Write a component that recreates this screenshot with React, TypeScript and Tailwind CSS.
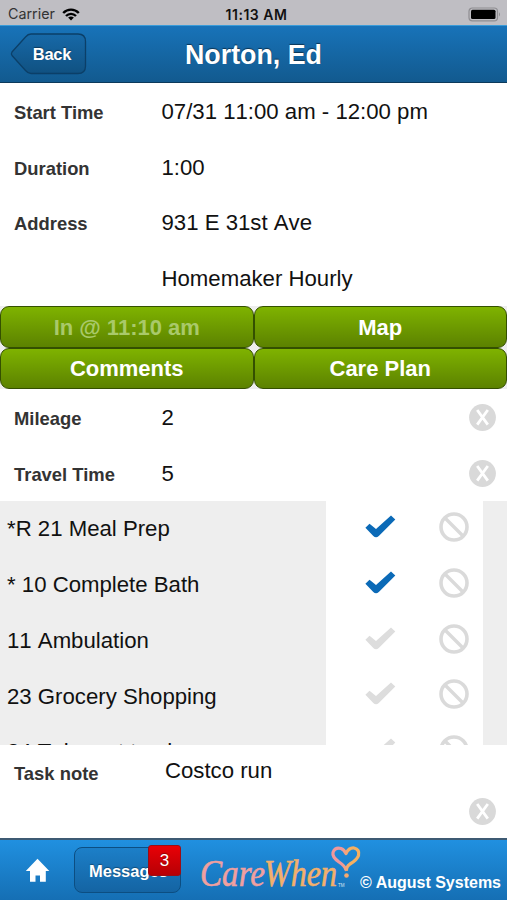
import type { ReactNode } from 'react';

const details = [
    { label: 'Start Time', value: '07/31 11:00 am - 12:00 pm' },
    { label: 'Duration', value: '1:00' },
    { label: 'Address', value: '931 E 31st Ave' },
    { label: '', value: 'Homemaker Hourly' },
];

const travel = [
    { label: 'Mileage', value: '2' },
    { label: 'Travel Time', value: '5' },
];

const actions = [
    { name: 'In @ 11:10 am', disabled: true },
    { name: 'Map', disabled: false },
    { name: 'Comments', disabled: false },
    { name: 'Care Plan', disabled: false },
];

const tasks = [
    { name: '*R 21 Meal Prep', done: true },
    { name: '* 10 Complete Bath', done: true },
    { name: '11 Ambulation', done: false },
    { name: '23 Grocery Shopping', done: false },
    { name: '24 Take out trash', done: false },
];

function ClearButton() {
    return (
        <button className="block shrink-0">
            <svg className="block h-[27px] w-[27px]" viewBox="0 0 27 27">
                <circle cx="13.5" cy="13.5" r="13.4" fill="#d9d9d9" />
                <path d="M8.2 6L18.8 20.6M18.8 6L8.2 20.6" stroke="#fff" strokeWidth="2.8" />
            </svg>
        </button>
    );
}

function CheckIcon({ done }: { done: boolean }) {
    return (
        <svg className="block h-[23px] w-[31px]" viewBox="0 0 31 23">
            <path
                d="M0.4 12.7L4.5 8.7L11 14L26 0.4L30.3 4.6L13.8 21Q11 23.6 8.3 21Z"
                fill={done ? '#0b6ab7' : '#dddddd'}
            />
        </svg>
    );
}

function BanIcon() {
    return (
        <svg className="block h-[30px] w-[30px]" viewBox="0 0 30 30" fill="none" stroke="#dadada">
            <circle cx="15" cy="15" r="13" strokeWidth="3.6" />
            <path d="M6 6L24 24" strokeWidth="3.4" />
        </svg>
    );
}

function Row({ label, value, children }: { label: string; value: string; children?: ReactNode }) {
    return (
        <div className="flex h-[55.6px] items-center pr-[11px] pl-[14px]">
            <div className="w-[147.5px] shrink-0 pt-[2px] text-[18.4px] font-bold text-[#333]">{label}</div>
            <div className="grow text-[22.2px] whitespace-nowrap text-[#111] [font-kerning:none]">{value}</div>
            {children}
        </div>
    );
}

function StatusBar() {
    return (
        <div className="grid h-[25px] grid-cols-3 items-center bg-[#bfbec3] pt-[3px] font-['Inter',sans-serif] text-[14px] text-[#111]">
            <div className="flex items-center gap-[7px] pl-[8px] text-[#333]">
                <span className="text-[14.3px]">Carrier</span>
                <svg className="h-[13px] w-[18px]" viewBox="0 0 18 13" fill="none" stroke="#000" strokeWidth="2.4">
                    <path d="M1.2 5C5.6 0.5 12.4 0.5 16.8 5" />
                    <path d="M4 8C6.8 5.1 11.2 5.1 14 8" />
                    <path d="M9 12.4L6.1 9.6Q9 7.2 11.9 9.6Z" fill="#000" stroke="none" />
                </svg>
            </div>
            <div className="pl-[6px] text-center font-semibold tracking-[0.5px]">11:13 AM</div>
            <div className="flex justify-end pr-[6px]">
                <svg className="h-[15px] w-[33px]" viewBox="0 0 33 15">
                    <rect x="1" y="1" width="28.5" height="12.8" rx="3.4" fill="none" stroke="#8f8e92" strokeWidth="1.2" />
                    <rect x="3" y="2.8" width="24.5" height="9.2" rx="1.5" fill="#000" />
                    <path d="M31 5.3Q33 7.4 31 9.5Z" fill="#8f8e92" />
                </svg>
            </div>
        </div>
    );
}

function Header() {
    return (
        <header className="relative flex h-[58px] items-center justify-center border-t border-b border-t-[#3b9cd8] border-b-[#0c3a5b] bg-gradient-to-b from-[#1873b9] to-[#125a8f] pt-[3px]">
            <button className="absolute top-[7px] left-[10px] h-[42px] w-[77px]">
                <svg className="absolute inset-0 h-full w-full" viewBox="0 0 77 42">
                    <defs>
                        <linearGradient id="back" x1="0" y1="0" x2="0" y2="1">
                            <stop offset="0" stopColor="#1769a8" />
                            <stop offset="1" stopColor="#105181" />
                        </linearGradient>
                    </defs>
                    <path
                        d="M21 1H68Q75.5 1 75.5 8.5V33Q75.5 40.5 68 40.5H21Q18 40.5 15.5 37.5L2 22.5Q0.8 20.8 2 19L15.5 4Q18 1 21 1Z"
                        fill="url(#back)"
                        stroke="#0b3f68"
                        strokeWidth="1.3"
                    />
                </svg>
                <span className="relative top-px pl-[7px] text-[16.5px] leading-none font-bold tracking-[-0.2px] text-white [text-shadow:0_-1px_1px_rgba(0,0,0,0.4)]">
                    Back
                </span>
            </button>
            <h1 className="text-[26.8px] font-bold text-white [text-shadow:0_-1px_1px_rgba(0,0,0,0.5)]">Norton, Ed</h1>
        </header>
    );
}

function Logo() {
    return (
        <svg className="block h-[60px] w-[166px]" viewBox="0 0 166 60">
            <defs>
                <linearGradient id="heart" x1="0" y1="0" x2="1" y2="0">
                    <stop offset="0.35" stopColor="#f0989c" />
                    <stop offset="0.65" stopColor="#f6b060" />
                </linearGradient>
            </defs>
            <g fontFamily="'Liberation Serif', serif" fontStyle="italic" fontSize="37" strokeWidth="0.6">
                <text x="5" y="45.500" textLength="65" lengthAdjust="spacingAndGlyphs" fill="#f0a09f" stroke="#f0a09f">Care</text>
                <text x="69" y="45.500" textLength="73" lengthAdjust="spacingAndGlyphs" fill="#f2b06c" stroke="#f2b06c">When</text>
            </g>
            <path
                d="M151 30Q150 26 144 22Q137 17 138 12.500Q140 7 146 8.500Q149 9.500 151 13.500Q154 7.500 159 8Q165 9.500 163.500 15.500Q162 20 155 24Q151 27 151.500 31"
                fill="none"
                stroke="url(#heart)"
                strokeWidth="3.2"
                strokeLinejoin="round"
            />
            <circle cx="151.500" cy="35.500" r="2.300" fill="#f6a96e" />
            <text x="143" y="47" fontFamily="'Liberation Sans', sans-serif" fontSize="4.500" fill="#d8e6f2">TM</text>
        </svg>
    );
}

function Footer() {
    return (
        <footer className="flex h-[62px] border-t-2 border-[#3d5a73] bg-gradient-to-b from-[#2090e0] to-[#156fb4]">
            <button className="mt-[18px] ml-[25px] h-[25px] w-[25px] shrink-0">
                <svg className="block h-[25px] w-[25px]" viewBox="0 0 25 25" fill="#fff">
                    <path d="M12.500 0.800L24.300 13H20.800V23.800H15V17.500H10.500V23.800H5V13H0.800Z" />
                </svg>
            </button>
            <button className="relative mt-[7px] ml-[24px] h-[46px] w-[107px] shrink-0 rounded-[8px] border border-[#0c4e82] bg-gradient-to-b from-[#1c7fc8] to-[#1464a3] pt-[2px] pl-[14px] text-left text-[16.5px] font-bold text-white [text-shadow:0_-1px_1px_rgba(0,0,0,0.35)]">
                Messages
                <span className="absolute -top-[3px] -right-px flex h-[31px] w-[33px] items-center justify-center rounded-[3px] border border-[#9c0d14] bg-gradient-to-b from-[#e90006] to-[#b70005] text-[17px] font-normal">
                    3
                </span>
            </button>
            <div className="ml-[14px] shrink-0">
                <Logo />
            </div>
            <div className="-ml-px pt-[33px] text-[16px] leading-[20px] font-bold whitespace-nowrap text-white">© August Systems</div>
        </footer>
    );
}

export default function App() {
    return (
        <div className="flex h-[900px] w-[507px] flex-col overflow-hidden bg-white font-['Liberation_Sans',Arial,sans-serif]">
            <StatusBar />
            <Header />

            <div className="h-[223px] pt-px">
                {details.map((item) => (
                    <Row key={item.value} label={item.label} value={item.value} />
                ))}
            </div>

            <div className="grid h-[83px] grid-cols-2 grid-rows-2 bg-[#eee]">
                {actions.map((action) => (
                    <button
                        key={action.name}
                        disabled={action.disabled}
                        className="rounded-[9px] border-[1.5px] border-[#345000] bg-gradient-to-b from-[#7fb300] to-[#5c8200] pt-[2px] text-[22px] leading-none font-bold text-white disabled:text-[#a9c96a]"
                    >
                        {action.name}
                    </button>
                ))}
            </div>

            <div className="h-[112px] pt-px">
                {travel.map((item) => (
                    <Row key={item.label} label={item.label} value={item.value}>
                        <ClearButton />
                    </Row>
                ))}
            </div>

            <div className="h-[244px] overflow-hidden bg-[#eee]">
                {tasks.map((task) => (
                    <div key={task.name} className="flex h-[55.8px]">
                        <div className="flex w-[326px] items-center pl-[7px] text-[22.2px] text-[#111] [font-kerning:none]">{task.name}</div>
                        <div className="flex w-[156.500px] bg-white pt-[11px] pl-[39px]">
                            <div className="pt-[3px]">
                                <CheckIcon done={task.done} />
                            </div>
                            <div className="ml-[43px]">
                                <BanIcon />
                            </div>
                        </div>
                    </div>
                ))}
            </div>

            <div className="flex grow pr-[11px] pl-[14px]">
                <div className="w-[151px] shrink-0 pt-[15px] text-[18.4px] font-bold text-[#333]">Task note</div>
                <div className="grow pt-[9px] text-[22.2px] text-[#111]">Costco run</div>
                <div className="self-end pb-[13px]">
                    <ClearButton />
                </div>
            </div>

            <Footer />
        </div>
    );
}
